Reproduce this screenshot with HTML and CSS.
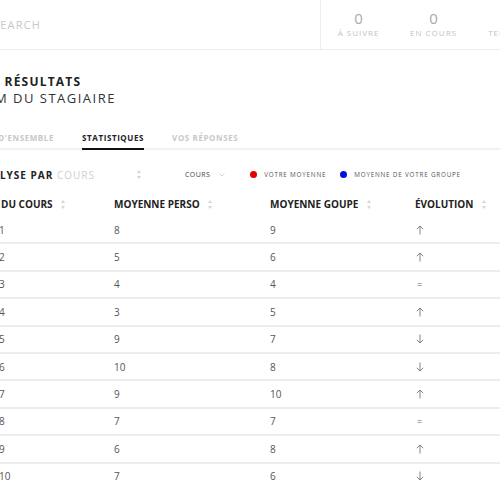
FILE: index.html
```html
<!DOCTYPE html>
<html lang="fr">
<head>
<meta charset="utf-8">
<link rel="stylesheet" href="styles.css">
</head>
<body>
<div class="page">
  <header class="topbar">
    <div class="search">SEARCH</div>
    <div class="stats">
      <div class="stat"><span class="num">0</span><span class="lbl">À SUIVRE</span></div>
      <div class="stat"><span class="num">0</span><span class="lbl">EN COURS</span></div>
      <div class="stat"><span class="num">0</span><span class="lbl">TERMINÉ</span></div>
    </div>
  </header>

  <section class="titles">
    <h1 class="title">MES RÉSULTATS</h1>
    <h2 class="subtitle">NOM DU STAGIAIRE</h2>
  </section>

  <nav class="tabs">
    <span class="tab">VUE D'ENSEMBLE</span>
    <span class="tab active">STATISTIQUES</span>
    <span class="tab">VOS RÉPONSES</span>
  </nav>

  <div class="filters">
    <div class="analyse"><b>ANALYSE PAR</b> <span class="sel">COURS</span></div>
    <svg class="sort big" viewBox="0 0 4 9" width="4" height="9"><path d="M2 0 L4 3 H0 Z M2 9 L4 6 H0 Z" fill="#d5d5d5"/></svg>
    <div class="dropdown">COURS
      <svg viewBox="0 0 6 4" width="6" height="4"><path d="M0.5 0.5 L3 3 L5.5 0.5" fill="none" stroke="#c8c8c8" stroke-width="0.8"/></svg>
    </div>
    <div class="legend"><span class="dot red"></span>VOTRE MOYENNE</div>
    <div class="legend"><span class="dot blue"></span>MOYENNE DE VOTRE GROUPE</div>
  </div>

  <table class="grid">
    <colgroup>
      <col class="c1"><col class="c2"><col class="c3"><col class="c4">
    </colgroup>
    <thead>
      <tr>
        <th class="first">N° DU COURS <svg class="sort" viewBox="0 0 4 9" width="4" height="9"><path d="M2 0 L4 3 H0 Z M2 9 L4 6 H0 Z" fill="#d5d5d5"/></svg></th>
        <th>MOYENNE PERSO <svg class="sort" viewBox="0 0 4 9" width="4" height="9"><path d="M2 0 L4 3 H0 Z M2 9 L4 6 H0 Z" fill="#d5d5d5"/></svg></th>
        <th>MOYENNE GOUPE <svg class="sort" viewBox="0 0 4 9" width="4" height="9"><path d="M2 0 L4 3 H0 Z M2 9 L4 6 H0 Z" fill="#d5d5d5"/></svg></th>
        <th>ÉVOLUTION <svg class="sort" viewBox="0 0 4 9" width="4" height="9"><path d="M2 0 L4 3 H0 Z M2 9 L4 6 H0 Z" fill="#d5d5d5"/></svg></th>
      </tr>
    </thead>
    <tbody>
      <tr><td class="first">1</td><td>8</td><td>9</td><td><svg class="arr" viewBox="0 0 8 10" width="8" height="10"><path d="M4 1 V9.5 M0.8 4.2 L4 1 L7.2 4.2" fill="none" stroke="#666" stroke-width="0.8"/></svg></td></tr>
      <tr><td class="first">2</td><td>5</td><td>6</td><td><svg class="arr" viewBox="0 0 8 10" width="8" height="10"><path d="M4 1 V9.5 M0.8 4.2 L4 1 L7.2 4.2" fill="none" stroke="#666" stroke-width="0.8"/></svg></td></tr>
      <tr><td class="first">3</td><td>4</td><td>4</td><td><span class="eq">=</span></td></tr>
      <tr><td class="first">4</td><td>3</td><td>5</td><td><svg class="arr" viewBox="0 0 8 10" width="8" height="10"><path d="M4 1 V9.5 M0.8 4.2 L4 1 L7.2 4.2" fill="none" stroke="#666" stroke-width="0.8"/></svg></td></tr>
      <tr><td class="first">5</td><td>9</td><td>7</td><td><svg class="arr" viewBox="0 0 8 10" width="8" height="10"><path d="M4 0.5 V9 M0.8 5.8 L4 9 L7.2 5.8" fill="none" stroke="#666" stroke-width="0.8"/></svg></td></tr>
      <tr><td class="first">6</td><td>10</td><td>8</td><td><svg class="arr" viewBox="0 0 8 10" width="8" height="10"><path d="M4 0.5 V9 M0.8 5.8 L4 9 L7.2 5.8" fill="none" stroke="#666" stroke-width="0.8"/></svg></td></tr>
      <tr><td class="first">7</td><td>9</td><td>10</td><td><svg class="arr" viewBox="0 0 8 10" width="8" height="10"><path d="M4 1 V9.5 M0.8 4.2 L4 1 L7.2 4.2" fill="none" stroke="#666" stroke-width="0.8"/></svg></td></tr>
      <tr><td class="first">8</td><td>7</td><td>7</td><td><span class="eq">=</span></td></tr>
      <tr><td class="first">9</td><td>6</td><td>8</td><td><svg class="arr" viewBox="0 0 8 10" width="8" height="10"><path d="M4 1 V9.5 M0.8 4.2 L4 1 L7.2 4.2" fill="none" stroke="#666" stroke-width="0.8"/></svg></td></tr>
      <tr><td class="first">10</td><td>7</td><td>6</td><td><svg class="arr" viewBox="0 0 8 10" width="8" height="10"><path d="M4 0.5 V9 M0.8 5.8 L4 9 L7.2 5.8" fill="none" stroke="#666" stroke-width="0.8"/></svg></td></tr>
    </tbody>
  </table>
</div>
</body>
</html>
```

FILE: styles.css
```css
html, body {
  margin: 0;
  padding: 0;
  background: #fff;
  overflow: hidden;
}
body {
  font-family: "Open Sans", "Liberation Sans", sans-serif;
  color: #222;
}
.page {
  margin-left: -28px;
  width: 600px;
}

/* top bar */
.topbar {
  display: flex;
  height: 49px;
  border-bottom: 1px solid #ececec;
}
.search {
  width: 348px;
  box-sizing: border-box;
  padding-left: 21px;
  display: flex;
  align-items: center;
  font-size: 11px;
  letter-spacing: 1.2px;
  color: #c4c8cc;
}
.stats {
  display: flex;
  border-left: 1px solid #ececec;
}
.stat {
  width: 75px;
  display: flex;
  flex-direction: column;
  align-items: center;
  padding-top: 9px;
}
.num {
  font-size: 15px;
  line-height: 18px;
  color: #a3acb5;
}
.lbl {
  font-size: 8px;
  letter-spacing: 1px;
  line-height: 12px;
  color: #bcc3c9;
}

/* titles */
.titles {
  padding-top: 23px;
}
.title {
  margin: 0;
  font-size: 12px;
  font-weight: 700;
  letter-spacing: 1.2px;
  line-height: 17px;
  color: #222;
}
.subtitle {
  margin: 0;
  font-size: 13px;
  font-weight: 400;
  letter-spacing: 1.5px;
  line-height: 17px;
  color: #333;
}

/* tabs */
.tabs {
  display: flex;
  gap: 28px;
  margin-top: 25px;
  padding-left: 6px;
  border-bottom: 2px solid #f2f2f2;
}
.tab {
  font-size: 8px;
  font-weight: 700;
  letter-spacing: 0.6px;
  color: #c8c8c8;
  padding-bottom: 5px;
  line-height: 11px;
}
.tab.active {
  color: #222;
  border-bottom: 2px solid #111;
  margin-bottom: -2px;
}

/* filters */
.filters {
  display: flex;
  align-items: center;
  height: 31px;
  margin-top: 9px;
}
.analyse {
  font-size: 10px;
  letter-spacing: 1px;
  width: 165px;
  padding-left: 3px;
  box-sizing: border-box;
}
.analyse b {
  color: #222;
}
.sel {
  color: #cfcfcf;
  letter-spacing: 1px;
}
.sort.big {
  margin-right: 44px;
}
.dropdown {
  font-size: 7px;
  letter-spacing: 0.4px;
  color: #444;
  display: flex;
  align-items: center;
  gap: 9px;
  margin-right: 25px;
}
.legend {
  display: flex;
  align-items: center;
  font-size: 6.3px;
  letter-spacing: 0.8px;
  color: #555;
  margin-right: 14px;
}
.dot {
  width: 7px;
  height: 7px;
  border-radius: 50%;
  margin-right: 7px;
}
.dot.red { background: #e40000; }
.dot.blue { background: #0010e0; }

/* table */
.grid {
  border-collapse: collapse;
  table-layout: fixed;
  width: 600px;
}
.c1 { width: 142px; }
.c2 { width: 156px; }
.c3 { width: 145px; }
.c4 { width: 157px; }
th {
  text-align: left;
  font-size: 10px;
  font-weight: 700;
  color: #222;
  height: 27px;
  padding: 0;
  vertical-align: middle;
  white-space: nowrap;
}
th.first {
  padding-left: 14px;
}
th .sort {
  margin-left: 6px;
  vertical-align: -1px;
}
td {
  font-size: 10px;
  color: #555;
  height: 25.4px;
  padding: 0;
  border-bottom: 2px solid #ededed;
  vertical-align: middle;
}
td.first {
  padding-left: 27px;
}
tbody tr:last-child td {
  border-bottom: none;
}
.arr {
  display: block;
  margin-left: 1px;
}
.eq {
  font-size: 9px;
  padding-left: 2px;
  color: #666;
}
```
